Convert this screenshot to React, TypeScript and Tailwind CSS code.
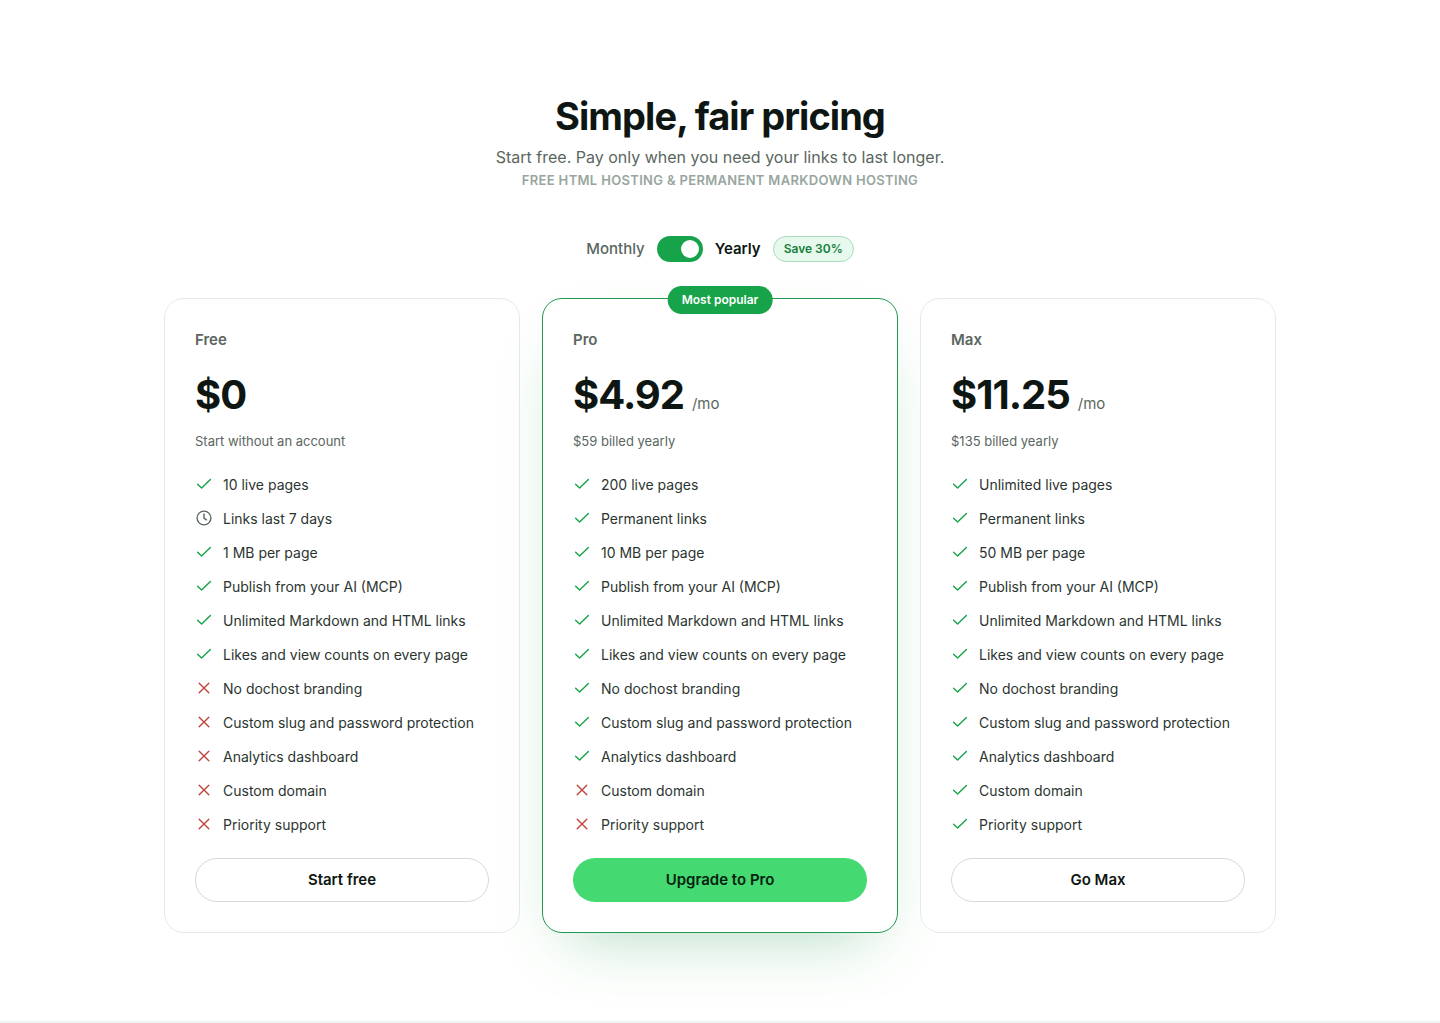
import { useState } from 'react';
import { clsx } from 'clsx';

type Mark = 'yes' | 'no' | 'clock';

interface Plan {
  name: string;
  yearly: string;
  monthly: string;
  yearlyNote: string;
  monthlyNote: string;
  cta: string;
  popular?: boolean;
  features: { label: string; mark: Mark }[];
}

const shared = [
  'Publish from your AI (MCP)',
  'Unlimited Markdown and HTML links',
  'Likes and view counts on every page',
  'No dochost branding',
  'Custom slug and password protection',
  'Analytics dashboard',
  'Custom domain',
  'Priority support',
];

// The first `included` shared features get a check, the rest a cross.
const sharedFeatures = (included: number) =>
  shared.map((label, i) => ({ label, mark: (i < included ? 'yes' : 'no') as Mark }));

const plans: Plan[] = [
  {
    name: 'Free',
    yearly: '$0',
    monthly: '$0',
    yearlyNote: 'Start without an account',
    monthlyNote: 'Start without an account',
    cta: 'Start free',
    features: [
      { label: '10 live pages', mark: 'yes' },
      { label: 'Links last 7 days', mark: 'clock' },
      { label: '1 MB per page', mark: 'yes' },
      ...sharedFeatures(3),
    ],
  },
  {
    name: 'Pro',
    yearly: '$4.92',
    monthly: '$7',
    yearlyNote: '$59 billed yearly',
    monthlyNote: 'Billed monthly',
    cta: 'Upgrade to Pro',
    popular: true,
    features: [
      { label: '200 live pages', mark: 'yes' },
      { label: 'Permanent links', mark: 'yes' },
      { label: '10 MB per page', mark: 'yes' },
      ...sharedFeatures(6),
    ],
  },
  {
    name: 'Max',
    yearly: '$11.25',
    monthly: '$16',
    yearlyNote: '$135 billed yearly',
    monthlyNote: 'Billed monthly',
    cta: 'Go Max',
    features: [
      { label: 'Unlimited live pages', mark: 'yes' },
      { label: 'Permanent links', mark: 'yes' },
      { label: '50 MB per page', mark: 'yes' },
      ...sharedFeatures(8),
    ],
  },
];

function MarkIcon({ mark }: { mark: Mark }) {
  return (
    <svg
      viewBox="0 0 18 18"
      fill="none"
      stroke="currentColor"
      strokeWidth="1.4"
      strokeLinecap="round"
      strokeLinejoin="round"
      aria-hidden="true"
      className={clsx(
        'mt-px size-[18px] shrink-0',
        mark === 'yes' && 'text-[#17a34a]',
        mark === 'no' && 'text-[#c0443e]',
        mark === 'clock' && 'text-[#5b6660]',
      )}
    >
      {mark === 'yes' && <path d="M2.6 9.2 6.6 13 15.4 4.4" />}
      {mark === 'no' && <path d="m4.2 4.2 9.6 9.6m0-9.6-9.6 9.6" />}
      {mark === 'clock' && (
        <>
          <circle cx="9" cy="9" r="6.9" />
          <path d="M9 5v4.2l2.4 1.6" />
        </>
      )}
    </svg>
  );
}

function PlanCard({ plan, yearly }: { plan: Plan; yearly: boolean }) {
  return (
    <article
      className={clsx(
        'relative flex flex-col rounded-[20px] border bg-white p-[30px]',
        plan.popular
          ? 'border-[#1f9950] shadow-[0_28px_60px_-28px_rgba(22,140,70,0.35)]'
          : 'border-[#e6eae8]',
      )}
    >
      {plan.popular && (
        <span className="absolute -top-[13px] left-1/2 -translate-x-1/2 rounded-full bg-[#17a34a] px-3.5 text-xs leading-7 font-semibold whitespace-nowrap text-white">
          Most popular
        </span>
      )}
      <h2 className="text-[15px] leading-[22px] font-semibold text-[#5b6660]">{plan.name}</h2>
      <p className="mt-4 flex items-baseline gap-2 text-[#0d1612]">
        <span className="text-[40px] leading-14 font-bold tracking-tight">
          {yearly ? plan.yearly : plan.monthly}
        </span>
        {plan.name !== 'Free' && <span className="text-[15px] text-[#5b6660]">/mo</span>}
      </p>
      <p className="mt-2 text-[13px] leading-5 text-[#5b6660]">
        {yearly ? plan.yearlyNote : plan.monthlyNote}
      </p>
      <ul className="mt-[23px] flex flex-col gap-3">
        {plan.features.map((f) => (
          <li key={f.label} className="flex gap-2.5 text-sm leading-[22px] text-[#2b3530]">
            <MarkIcon mark={f.mark} />
            {f.label}
          </li>
        ))}
      </ul>
      <button
        type="button"
        className={clsx(
          'mt-[22px] h-11 w-full cursor-pointer rounded-full text-[15px] font-semibold',
          plan.popular
            ? 'bg-[#45d972] text-[#06210f]'
            : 'border border-[#d3d9d6] bg-white text-[#0d1612]',
        )}
      >
        {plan.cta}
      </button>
    </article>
  );
}

export default function App() {
  const [yearly, setYearly] = useState(true);

  return (
    <div className="min-h-screen bg-[#fefffe] font-['Inter',sans-serif] text-[#0d1612]">
      <main className="mx-auto max-w-[1160px] px-6 py-[88px]">
        <header className="text-center">
          <h1 className="text-[38px] leading-14 font-bold tracking-tight">Simple, fair pricing</h1>
          <p className="text-base leading-[26px] text-[#5b6660]">
            Start free. Pay only when you need your links to last longer.
          </p>
          <p className="text-[13px] leading-5 font-semibold tracking-wide text-[#98a69f] uppercase">
            Free HTML hosting &amp; permanent Markdown hosting
          </p>
        </header>

        <div className="mt-[46px] flex items-center justify-center gap-3 text-[15px]">
          <span className={yearly ? 'font-medium text-[#5b6660]' : 'font-semibold'}>Monthly</span>
          <input
            type="checkbox"
            role="switch"
            aria-label="Yearly billing"
            checked={yearly}
            onChange={(e) => setYearly(e.target.checked)}
            className="h-[26px] w-[46px] cursor-pointer appearance-none rounded-full bg-[#c9d1cd] p-1 transition-colors before:block before:size-[18px] before:rounded-full before:bg-white checked:bg-[#17a34a] checked:before:ml-auto"
          />
          <span className={yearly ? 'font-semibold' : 'font-medium text-[#5b6660]'}>Yearly</span>
          <span className="rounded-full border border-[#aadbbd] bg-[#e7f8ed] px-2.5 text-xs leading-6 font-semibold text-[#15803d]">
            Save 30%
          </span>
        </div>

        <div className="mt-9 grid grid-cols-1 gap-[22px] md:grid-cols-3">
          {plans.map((plan) => (
            <PlanCard key={plan.name} plan={plan} yearly={yearly} />
          ))}
        </div>
      </main>
      <hr className="border-t-2 border-[#eef6f3]" />
    </div>
  );
}
